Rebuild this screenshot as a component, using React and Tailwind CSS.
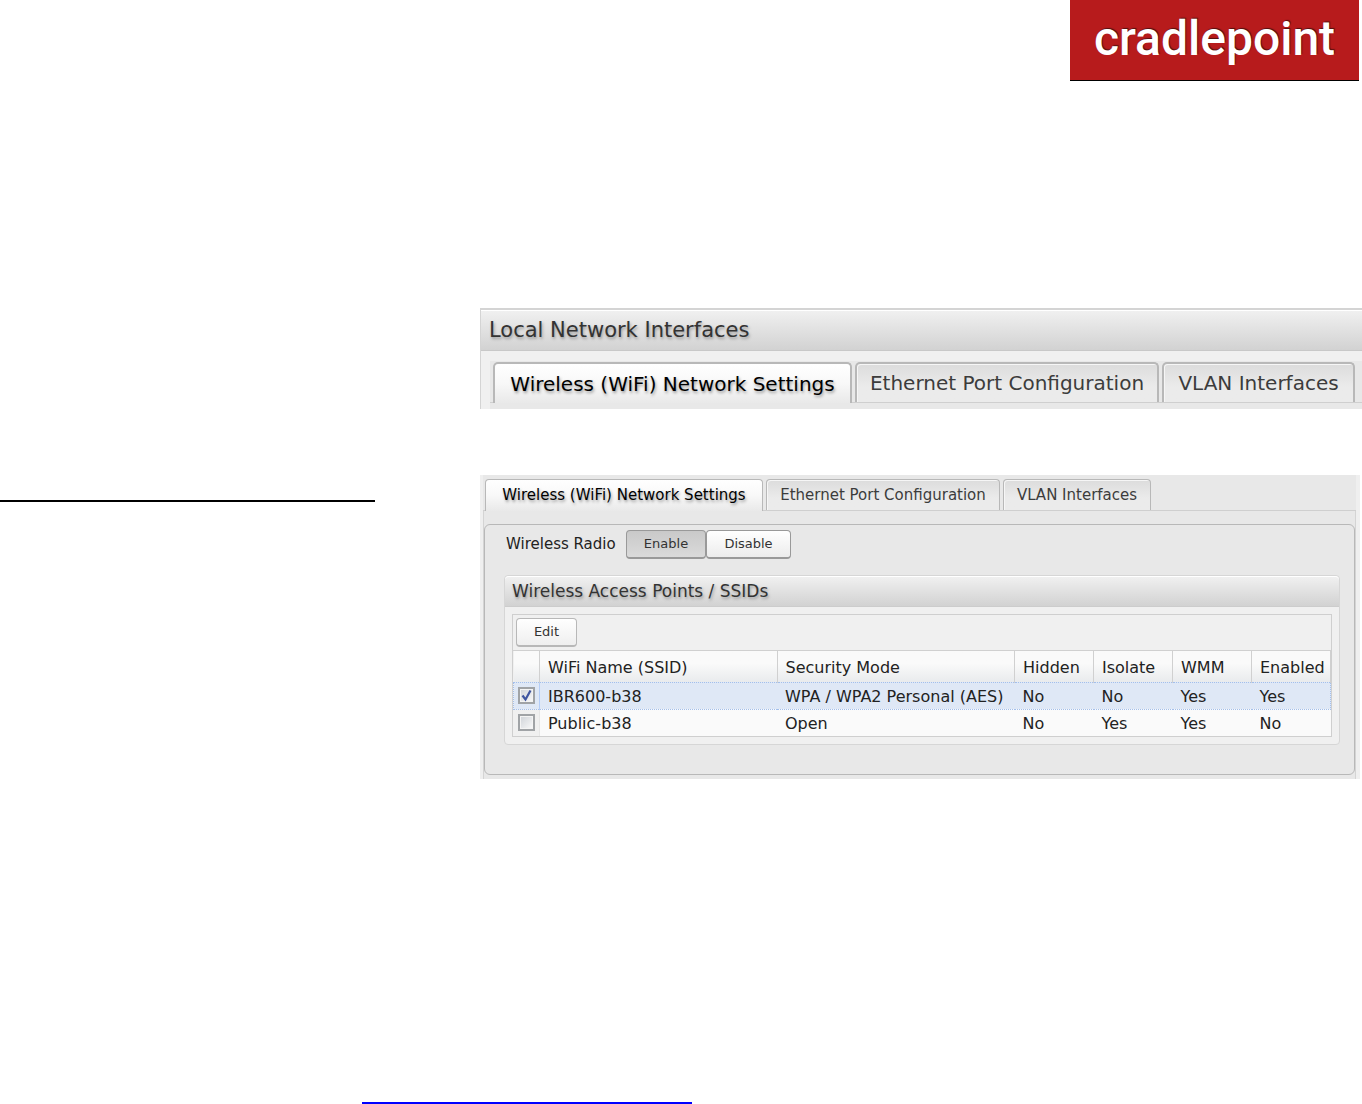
import React, { useState } from 'react';

const tabs = [
  { label: 'Wireless (WiFi) Network Settings', width: 'w-[278px]', largeWidth: 'w-[359px]' },
  { label: 'Ethernet Port Configuration', width: 'w-[234px]', largeWidth: 'w-[304px]' },
  { label: 'VLAN Interfaces', width: 'w-[148px]', largeWidth: 'w-[193px]' },
];

const columns = [
  { key: 'name', label: 'WiFi Name (SSID)', width: '' },
  { key: 'security', label: 'Security Mode', width: '' },
  { key: 'hidden', label: 'Hidden', width: 'w-[79px]' },
  { key: 'isolate', label: 'Isolate', width: 'w-[79px]' },
  { key: 'wmm', label: 'WMM', width: 'w-[79px]' },
  { key: 'enabled', label: 'Enabled', width: 'w-[79px]' },
];

const accessPoints = [
  { name: 'IBR600-b38', security: 'WPA / WPA2 Personal (AES)', hidden: 'No', isolate: 'No', wmm: 'Yes', enabled: 'Yes' },
  { name: 'Public-b38', security: 'Open', hidden: 'No', isolate: 'Yes', wmm: 'Yes', enabled: 'No' },
];

const Logo = () => (
  <div className="flex h-[81px] w-[289px] justify-center border-b border-black bg-[#b71b1c]">
    <span className="font-['Roboto',sans-serif] text-[48px] leading-[78px] font-medium text-white [text-shadow:1px_-1px_1px_#501010]">
      cradlepoint
    </span>
  </div>
);

const TabBar = ({ large = false }) => {
  const [active, setActive] = useState(0);

  return (
    <div
      role="tablist"
      className={`flex border-b border-[#cfcfcf] ${large ? 'h-[42px] gap-[3px] pt-px pl-[3px] text-[20px]' : 'h-9 gap-[3px] pt-1 pl-0.5 text-[15px]'}`}
    >
      {tabs.map((tab, i) => (
        <button
          key={tab.label}
          type="button"
          role="tab"
          aria-selected={active === i}
          onClick={() => setActive(i)}
          className={`whitespace-nowrap border-[#b8b8b8] ${
            large ? `rounded-t-[5px] border-x-2 border-t-2 ${tab.largeWidth}` : `rounded-t border-x border-t ${tab.width}`
          } ${
            active === i
              ? '-mb-px bg-linear-to-b from-white via-[#f8f8f8] to-[#e9e9e9] text-black [text-shadow:1px_2px_3px_#999]'
              : 'bg-linear-to-b from-[#dcdcdc] to-[#ebebeb] to-60% text-[#3c3c3c] inset-shadow-[1px_1px_0_#f6f6f6]'
          }`}
        >
          {tab.label}
        </button>
      ))}
    </div>
  );
};

const RadioToggle = () => {
  const [enabled, setEnabled] = useState(true);
  const base = 'h-[29px] rounded border border-b-2 border-[#999] text-[13px] text-[#333]';
  const on = 'bg-linear-to-b from-[#c9c9c9] to-[#dadada]';
  const off = 'bg-linear-to-b from-white to-[#ececec]';

  return (
    <div className="flex items-center pl-[21px]">
      <span className="w-[120px] text-[15px] text-[#222]">Wireless Radio</span>
      <button type="button" onClick={() => setEnabled(true)} className={`w-[80px] ${base} ${enabled ? on : off}`}>
        Enable
      </button>
      <button type="button" onClick={() => setEnabled(false)} className={`w-[85px] ${base} ${enabled ? off : on}`}>
        Disable
      </button>
    </div>
  );
};

const CheckBox = ({ label, checked, onChange }) => (
  <label className="relative mx-auto block size-[17px]">
    <input
      type="checkbox"
      aria-label={label}
      checked={checked}
      onChange={onChange}
      className="block size-[17px] appearance-none border-2 border-[#a0a3a6] bg-linear-to-br from-[#cfd3d8] to-[#fafafa] inset-shadow-[0_0_0_1px_#f4f4f4]"
    />
    {checked && (
      <svg viewBox="0 0 17 17" className="pointer-events-none absolute inset-0 size-[17px]" fill="none" stroke="#3f55a0" strokeWidth="2.2">
        <path d="M4.5 8.5 L7.5 12.5 L12.5 3.5" />
      </svg>
    )}
  </label>
);

const AccessPointTable = () => {
  const [selected, setSelected] = useState(0);

  return (
    <table className="w-full table-fixed border-collapse text-left text-[16px] leading-6 text-[#222]">
      <thead>
        <tr className="h-[31px] bg-linear-to-b from-[#fafafa] from-40% to-[#e9ebed]">
          <th className="w-[26px] border-r border-[#d0d0d0]" />
          {columns.map((col) => (
            <th key={col.key} className={`border-r border-[#d0d0d0] pt-1 pl-2 font-normal whitespace-nowrap ${col.width}`}>
              {col.label}
            </th>
          ))}
        </tr>
      </thead>
      <tbody>
        {accessPoints.map((ap, i) => (
          <tr
            key={ap.name}
            className={`h-[27px] ${selected === i ? 'border border-dotted border-[#a3bfec] bg-[#dfe8f6]' : 'bg-[#fafafa]'}`}
          >
            <td className={`border-r p-0 ${selected === i ? 'border-[#b3cdf8]' : 'border-[#e6e6e6] bg-[#f0f0f0]'}`}>
              <CheckBox label={ap.name} checked={selected === i} onChange={() => setSelected(selected === i ? -1 : i)} />
            </td>
            {columns.map((col) => (
              <td key={col.key} className="pt-0.5 pr-0 pb-0 pl-2 whitespace-nowrap">
                {ap[col.key]}
              </td>
            ))}
          </tr>
        ))}
      </tbody>
    </table>
  );
};

const LocalNetworkHeader = () => (
  <section className="border-t-2 border-l border-[#d4d4d4] bg-[#f0f0f0]">
    <h1 className="border-t border-b border-t-white border-b-[#c8c8c8] bg-linear-to-b from-[#f0f0f0] to-[#d2d2d2] pl-2 text-[21px] leading-[39px] text-[#333] [text-shadow:1px_2px_3px_#999]">
      Local Network Interfaces
    </h1>
    <div className="mt-[10px] ml-[9px] bg-[#e8e8e8] pb-[6px]">
      <TabBar large />
    </div>
  </section>
);

const WirelessSettings = () => (
  <section className="mr-0.5 border-r-4 border-l-[3px] border-[#efefef] bg-[#e8e8e8]">
    <TabBar />
    <div className="border-x border-[#d4d4d4] pt-[13px] pb-1">
      <div className="rounded-md border border-[#b8b8b8] pt-[5px] pb-[29px]">
        <RadioToggle />
        <div className="mt-4 mr-[14px] ml-[19px] rounded-sm border border-[#d6d6d6] bg-[#f0f0f0] pb-[7px]">
          <h2 className="rounded-t-sm border-t border-b border-t-white border-b-[#ccc] bg-linear-to-b from-[#f0f0f0] to-[#d2d2d2] pl-[7px] text-[17px] leading-[29px] text-[#333] [text-shadow:1px_2px_3px_#999]">
            Wireless Access Points / SSIDs
          </h2>
          <div className="mx-[7px] mt-[7px] border border-[#cfcfcf]">
            <div className="border-b border-[#d0d0d0] px-[3px] py-[3px]">
              <button
                type="button"
                className="block h-[29px] w-[61px] rounded border border-b-2 border-[#b8b8b8] bg-linear-to-b from-white to-[#efefef] text-[13px] text-[#333]"
              >
                Edit
              </button>
            </div>
            <AccessPointTable />
          </div>
        </div>
      </div>
    </div>
  </section>
);

const App = () => (
  <div className="flex min-h-screen flex-col bg-white font-['DejaVu_Sans',sans-serif]">
    <header className="flex justify-end pr-[3px]">
      <Logo />
    </header>
    <main className="mt-[227px] flex flex-1">
      <aside className="w-[480px] shrink-0 pt-48">
        <hr className="w-[375px] border-t-2 border-black" />
      </aside>
      <div className="flex min-w-0 flex-1 flex-col gap-[66px]">
        <LocalNetworkHeader />
        <WirelessSettings />
      </div>
    </main>
    <footer className="pl-[362px]">
      <hr className="w-[330px] border-t-2 border-[#0000ff]" />
    </footer>
  </div>
);

export default App;
